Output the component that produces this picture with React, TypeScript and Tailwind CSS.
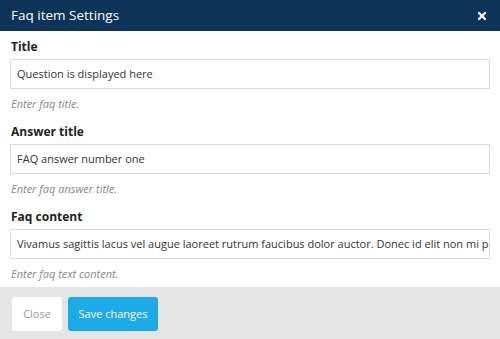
import { X } from "lucide-react";

const fields = [
  { label: "Title", value: "Question is displayed here", help: "Enter faq title." },
  { label: "Answer title", value: "FAQ answer number one", help: "Enter faq answer title." },
  {
    label: "Faq content",
    value:
      "Vivamus sagittis lacus vel augue laoreet rutrum faucibus dolor auctor. Donec id elit non mi porta gravida at eget metus.",
    help: "Enter faq text content.",
  },
];

export default function App() {
  return (
    <div
      className="w-[500px] h-[339px] flex flex-col bg-white overflow-hidden"
      style={{ fontFamily: '"Open Sans", sans-serif' }}
    >
      {/* Header */}
      <div className="h-[31px] bg-[#0e3358] flex items-center justify-between pl-[11px] pr-[12px]">
        <h1 className="text-[13.5px] text-white leading-none">Faq item Settings</h1>
        <X className="w-[12px] h-[12px] text-white" strokeWidth={4.5} />
      </div>

      {/* Body */}
      <div className="flex-1 px-[10px] pt-[7px] flex flex-col gap-[11px]">
        {fields.map((f) => (
          <div key={f.label} className="flex flex-col">
            <label className="text-[12px] font-bold text-[#222] leading-[18px] pl-[1px]">
              {f.label}
            </label>
            <div className="mt-[3px] h-[30px] border border-[#dcdcdc] flex items-center px-[6px] overflow-hidden">
              <span className="text-[11px] text-[#333] whitespace-nowrap">{f.value}</span>
            </div>
            <p className="mt-[6px] text-[11px] italic text-[#888] leading-[17px] pl-[1px]">
              {f.help}
            </p>
          </div>
        ))}
      </div>

      {/* Footer */}
      <div className="h-[52px] bg-[#e5e5e5] flex items-start gap-[6px] pt-[10px] px-[12px]">
        <button className="h-[34px] w-[50px] bg-white rounded-[3px] text-[11px] text-[#999]">
          Close
        </button>
        <button className="h-[34px] w-[90px] bg-[#1eaae7] rounded-[3px] text-[11px] text-white">
          Save changes
        </button>
      </div>
    </div>
  );
}
